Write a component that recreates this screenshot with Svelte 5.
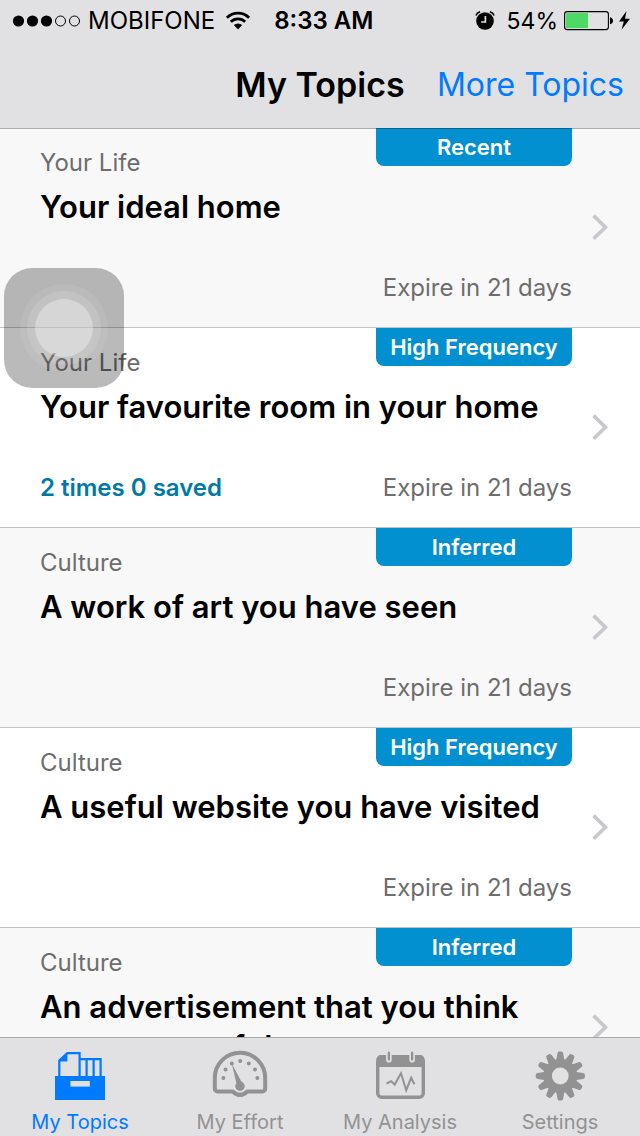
<script>
  const topics = [
    { category: 'Your Life', title: 'Your ideal home', tag: 'Recent', stats: '', expiry: 'Expire in 21 days' },
    { category: 'Your Life', title: 'Your favourite room in your home', tag: 'High Frequency', stats: '2 times 0 saved', expiry: 'Expire in 21 days' },
    { category: 'Culture', title: 'A work of art you have seen', tag: 'Inferred', stats: '', expiry: 'Expire in 21 days' },
    { category: 'Culture', title: 'A useful website you have visited', tag: 'High Frequency', stats: '', expiry: 'Expire in 21 days' },
    { category: 'Culture', title: 'An advertisement that you think was successful', tag: 'Inferred', stats: '', expiry: 'Expire in 21 days' }
  ];

  const tabs = ['My Topics', 'My Effort', 'My Analysis', 'Settings'];
  let active = $state('My Topics');

  const teeth = Array.from({ length: 12 }, (_, i) => i * 30);
  const signal = [true, true, true, false, false];
</script>

<div class="screen">
  <header class="top">
    <div class="status">
      <svg class="signal" width="68" height="12" viewBox="0 0 68 12" aria-hidden="true">
        {#each signal as on, i}
          <circle cx={6.5 + i * 14} cy="6" r={on ? 5.6 : 5} fill={on ? '#000' : 'none'} stroke={on ? 'none' : '#000'} />
        {/each}
      </svg>
      <span class="carrier">MOBIFONE</span>
      <svg class="wifi" width="26" height="20" viewBox="0 0 26 20" aria-hidden="true">
        <g fill="none" stroke="#000" stroke-width="2.7">
          <path d="M1.9 6.7a15.6 15.6 0 0 1 22.2 0" />
          <path d="M5.8 10.8a10.2 10.2 0 0 1 14.4 0" />
        </g>
        <path d="M8.8 14.1a6 6 0 0 1 8.4 0L13 18.5z" />
      </svg>
      <span class="time">8:33 AM</span>
      <div class="power">
        <svg width="20" height="20" viewBox="0 0 20 20" aria-hidden="true">
          <circle cx="10" cy="10" r="8.8" />
          <path d="M.9 4.5A6 6 0 0 1 5.1 .7M14.9 .7a6 6 0 0 1 4.2 3.8" fill="none" stroke="#000" stroke-width="1.5" />
          <path d="M10.4 5v6H6.2" fill="none" stroke="#e1e1e3" stroke-width="1.7" />
        </svg>
        <span>54%</span>
        <svg width="68" height="20" viewBox="0 0 68 20" aria-hidden="true">
          <rect x=".6" y=".6" width="43.8" height="18" rx="2.6" fill="none" stroke="#000" stroke-width="1.1" />
          <rect x="2" y="2.1" width="22" height="15" fill="#4cd964" />
          <path d="M46 6.2q3 1 3 3.5t-3 3.5z" />
          <path d="M62.5 0 55 10.5h4.8l-2.3 8.3 8.5-11h-5z" />
        </svg>
      </div>
    </div>
    <div class="navbar">
      <h1>My Topics</h1>
      <a class="more" href="#more">More Topics</a>
    </div>
  </header>

  <main>
    <ul class="list">
      {#each topics as topic}
        <li>
          <a class="row" href="#topic">
            <div class="body">
              <span class="category">{topic.category}</span>
              <span class="tag">{topic.tag}</span>
              <h2>{topic.title}</h2>
              <span class="stats">{topic.stats}</span>
              <span class="expiry">{topic.expiry}</span>
            </div>
            <svg width="16" height="28" viewBox="0 0 16 28" aria-hidden="true">
              <path d="M1.6 1.6 13.4 13.2 1.6 24.8" fill="none" stroke="#c7c7cc" stroke-width="3.6" />
            </svg>
          </a>
        </li>
      {/each}
    </ul>
  </main>

  <nav class="tabs">
    {#each tabs as tab}
      <button class="tab" class:active={active === tab} onclick={() => (active = tab)}>
        <svg width="56" height="52" viewBox="0 0 56 52" aria-hidden="true">
          {#if tab === 'My Topics'}
            <path d="M3 26h50v24H3z" fill="currentColor" />
            <path d="M18.4 31h19.4v5.6H18.4z" fill="#e1e1e3" />
            <path d="M7.3 27V10.4l8-7.3h12.3V27M27.6 9.2h21V27M34.6 9v18M41.6 9v18" fill="none" stroke="currentColor" stroke-width="2.2" />
            <path d="M6.4 11.5 15.4 2.4v9.1z" fill="currentColor" />
          {:else if tab === 'My Effort'}
            <path d="M21 41.4H5.4a2.6 2.6 0 0 1-2.6-2.6V28a25.2 25.2 0 0 1 50.4 0v10.8a2.6 2.6 0 0 1-2.6 2.6H35a8.6 8.6 0 0 1-14 0z" fill="none" stroke="currentColor" stroke-width="4" stroke-linejoin="round" />
            <path d="M22.6 39.5h10.8v5H22.6z" fill="#e1e1e3" />
            <path d="M21.5 41.7a8.6 8.6 0 0 0 13 0" fill="none" stroke="currentColor" stroke-width="4" />
            <path d="M19.8 13.6 30.6 34 25 36z" fill="currentColor" />
            <circle cx="28" cy="36.2" r="4.7" fill="currentColor" />
            <g fill="currentColor">
              <circle cx="11.4" cy="28" r="2" /><circle cx="13.5" cy="19.6" r="2" />
              <circle cx="19.8" cy="13.4" r="2" /><circle cx="28.2" cy="11" r="2" />
              <circle cx="36.8" cy="13.4" r="2" /><circle cx="43" cy="19.6" r="2" />
              <circle cx="45.4" cy="28" r="2" />
            </g>
          {:else if tab === 'My Analysis'}
            <rect x="5.7" y="6.7" width="45.6" height="40.6" rx="4" fill="none" stroke="currentColor" stroke-width="3.4" />
            <path d="M5 17V9q0-4 4-4h39q4 0 4 4v8z" fill="currentColor" />
            <g stroke-linecap="round">
              <path d="M16.9 2.5v7.3M40.1 2.5v7.3" stroke="#e1e1e3" stroke-width="5.6" />
              <path d="M16.9 2.6v7M40.1 2.6v7" stroke="currentColor" stroke-width="2.3" />
            </g>
            <path d="m14.5 33.5 4.7-2.3 3.5 3.4L29 23.2l5.2 17 5-12.4 3.2 6.4" fill="none" stroke="currentColor" stroke-width="2" />
          {:else}
            <g fill="currentColor">
              {#each teeth as angle}
                <path d="M24 11.6 25.4 3.4q.3-2 1.8-2h2.2q1.5 0 1.8 2L32.6 11.6z" transform="rotate({angle} 28.3 26)" />
              {/each}
            </g>
            <circle cx="28.3" cy="26" r="12.7" fill="none" stroke="currentColor" stroke-width="8.6" />
          {/if}
        </svg>
        <span>{tab}</span>
      </button>
    {/each}
  </nav>

  <button class="assist" aria-label="AssistiveTouch">
    <span class="ring"><span class="ring middle"><span class="ring inner"></span></span></span>
  </button>
</div>

<style>
  :global(body) {
    margin: 0;
    background: #fff;
  }

  .screen {
    position: relative;
    display: flex;
    flex-direction: column;
    height: 100vh;
    overflow: hidden;
    font-family: Inter, "Liberation Sans", sans-serif;
    color: #000;
  }

  a {
    color: inherit;
    text-decoration: none;
  }

  button {
    padding: 0;
    border: 0;
    background: none;
    font: inherit;
  }

  svg {
    flex: none;
    display: block;
  }

  .top {
    z-index: 1;
    flex: none;
    background: #e1e1e3;
    box-shadow: 0 1px 0 rgba(0, 0, 0, 0.3);
  }

  .status {
    display: flex;
    align-items: center;
    height: 42px;
    padding: 0 8px 0 12px;
    font-size: 24px;
    line-height: 42px;
    white-space: nowrap;
  }

  .carrier {
    margin: 0 10px 0 8px;
  }

  .time {
    margin-left: 23px;
    font-weight: 600;
  }

  .power {
    display: flex;
    align-items: center;
    gap: 6px;
    margin-left: auto;
  }

  .power span {
    margin-left: 6px;
  }

  .power span {
    font-size: 23px;
  }

  .navbar {
    display: grid;
    grid-template-columns: 1fr auto 1fr;
    align-items: center;
    height: 86px;
    padding: 0 16px;
    white-space: nowrap;
  }

  h1 {
    grid-column: 2;
    margin: 0;
    font-size: 34px;
    line-height: 40px;
    font-weight: 600;
  }

  .more {
    justify-self: end;
    font-size: 32px;
    line-height: 40px;
    color: #007aff;
  }

  main {
    flex: 1;
    min-height: 0;
    overflow: hidden;
  }

  .list {
    margin: 0;
    padding: 0;
    list-style: none;
  }

  .row {
    display: flex;
    align-items: center;
    gap: 20px;
    box-sizing: border-box;
    height: 200px;
    padding: 0 32px 0 40px;
    border-bottom: 1px solid #c3c3c5;
    background: #fff;
  }

  li:nth-child(odd) .row {
    background: #f8f8f8;
  }

  .body {
    flex: 1;
    display: grid;
    grid-template-columns: 1fr 196px;
    grid-template-rows: 59px 1fr 55px;
    height: 100%;
    font-size: 24px;
    color: #6d6d6d;
  }

  .category {
    padding-top: 19px;
    line-height: 32px;
  }

  .tag {
    height: 38px;
    border-radius: 0 0 8px 8px;
    background: #0290d0;
    color: #fff;
    font-size: 22px;
    line-height: 38px;
    font-weight: 600;
    text-align: center;
    white-space: nowrap;
  }

  h2 {
    grid-column: 1 / 3;
    margin: 0;
    font-size: 31px;
    line-height: 40px;
    font-weight: 600;
    color: #000;
  }

  .stats,
  .expiry {
    line-height: 32px;
  }

  .stats {
    color: #007aa5;
    font-weight: 600;
  }

  .expiry {
    text-align: right;
  }

  .tabs {
    z-index: 1;
    flex: none;
    display: grid;
    grid-template-columns: repeat(4, 1fr);
    height: 98px;
    border-top: 1px solid #a8a8aa;
    background: #e1e1e3;
  }

  .tab {
    display: flex;
    flex-direction: column;
    align-items: center;
    gap: 6px;
    padding-top: 12px;
    color: #929292;
    font-size: 20px;
    line-height: 28px;
  }

  .tab.active {
    color: #007aff;
  }

  .assist {
    position: absolute;
    z-index: 2;
    top: 268px;
    left: 4px;
    display: grid;
    place-items: center;
    width: 120px;
    height: 120px;
    border-radius: 28px;
    background: rgba(0, 0, 0, 0.27);
  }

  .ring {
    display: grid;
    place-items: center;
    width: 88px;
    height: 88px;
    border-radius: 50%;
    background: rgba(255, 255, 255, 0.07);
  }

  .middle {
    width: 74px;
    height: 74px;
    background: rgba(255, 255, 255, 0.12);
  }

  .inner {
    width: 58px;
    height: 58px;
    background: rgba(255, 255, 255, 0.33);
  }
</style>
